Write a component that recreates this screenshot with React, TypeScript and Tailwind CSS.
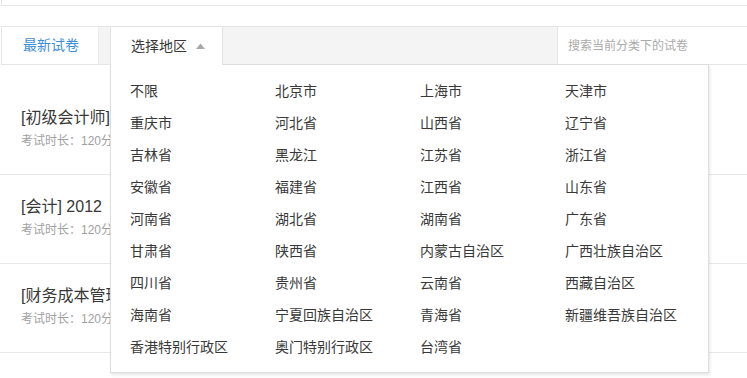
import React from "react";

const regions = [
  "不限", "北京市", "上海市", "天津市",
  "重庆市", "河北省", "山西省", "辽宁省",
  "吉林省", "黑龙江", "江苏省", "浙江省",
  "安徽省", "福建省", "江西省", "山东省",
  "河南省", "湖北省", "湖南省", "广东省",
  "甘肃省", "陕西省", "内蒙古自治区", "广西壮族自治区",
  "四川省", "贵州省", "云南省", "西藏自治区",
  "海南省", "宁夏回族自治区", "青海省", "新疆维吾族自治区",
  "香港特别行政区", "奥门特别行政区", "台湾省",
];

const papers = [
  { title: "[初级会计师] 2012年初级会计实务模拟试题", meta: "考试时长：120分钟  总分：100分" },
  { title: "[会计] 2012\u00a0\u00a0年注册会计师会计科目模拟试题", meta: "考试时长：120分钟  总分：100分" },
  { title: "[财务成本管理] 2012年注册会计师模拟试题", meta: "考试时长：120分钟  总分：100分" },
];

export default function App() {
  return (
    <div
      className="relative w-[747px] h-[378px] overflow-hidden bg-white text-[#333]"
      style={{ fontFamily: '"Liberation Sans", "Noto Sans CJK SC", sans-serif' }}
    >
      <div className="ml-[1px] h-[6px] border-l border-b border-[#e6e6e6]" />
      <div className="h-[20px]" />
      <div className="ml-[1px] h-[39px] flex border-t border-b border-l border-[#e6e6e6] bg-[#f4f4f4]">
        <div className="w-[97px] bg-white border-r border-[#ececec] flex items-center pl-[21px] text-[14px] text-[#3d8ed8]">
          最新试卷
        </div>
        <div className="w-[11px]" />
        <div className="relative z-20 w-[113px] -mb-px -mt-px h-[39px] bg-white border-l border-r border-t border-[#e2e2e2] flex items-center pl-[20px] text-[14px] text-[#383838]">
          选择地区
          <svg width="9" height="6" viewBox="0 0 9 6" className="ml-[9px]">
            <path d="M0 6 L4.5 0.5 L9 6 Z" fill="#a8a8a8" />
          </svg>
        </div>
        <div className="flex-1" />
        <div className="w-[190px] bg-white border-l border-[#e6e6e6] flex items-center pl-[10px] text-[12px] text-[#aaa]">
          搜索当前分类下的试卷
        </div>
      </div>

      <div className="pt-[21px]">
        {papers.map((p, i) => (
          <div key={i} className="border-b border-[#e8e8e8] pl-[21px] pt-[21px] pb-[24px]">
            <div className="text-[16px] leading-[22px] text-[#383838] whitespace-nowrap">{p.title}</div>
            <div className="mt-[3px] text-[12px] leading-[18px] text-[#a0a0a0] whitespace-nowrap">{p.meta}</div>
          </div>
        ))}
      </div>

      <div className="absolute z-10 left-[110px] top-[64px] w-[599px] h-[309px] bg-white border border-[#dedede] shadow-[1px_2px_3px_rgba(0,0,0,0.1)] pl-[19px] pt-[10px]">
        <div className="grid grid-cols-[145px_145px_145px_145px]">
          {regions.map((r) => (
            <div key={r} className="h-[32px] flex items-center text-[14px] text-[#383838] whitespace-nowrap">
              {r}
            </div>
          ))}
        </div>
      </div>
    </div>
  );
}
